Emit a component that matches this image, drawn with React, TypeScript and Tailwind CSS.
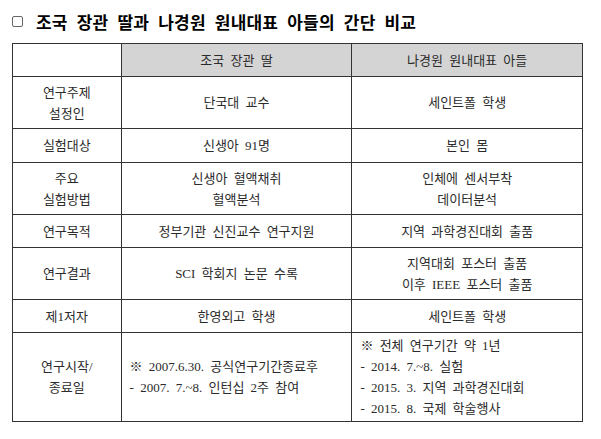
import React from 'react'

const body = { fontFamily: '"Liberation Serif", "Noto Sans CJK KR", serif' }

interface Row {
  label: string[]
  a: string[]
  b: string[]
  h: string
  left?: boolean
}

const rows: Row[] = [
  { label: ['연구주제', '설정인'], a: ['단국대 교수'], b: ['세인트폴 학생'], h: 'h-[52px]' },
  { label: ['실험대상'], a: ['신생아 91명'], b: ['본인 몸'], h: 'h-[34px]' },
  { label: ['주요', '실험방법'], a: ['신생아 혈액채취', '혈액분석'], b: ['인체에 센서부착', '데이터분석'], h: 'h-[52px]' },
  { label: ['연구목적'], a: ['정부기관 신진교수 연구지원'], b: ['지역 과학경진대회 출품'], h: 'h-[33px]' },
  { label: ['연구결과'], a: ['SCI 학회지 논문 수록'], b: ['지역대회 포스터 출품', '이후 IEEE 포스터 출품'], h: 'h-[52px]' },
  { label: ['제1저자'], a: ['한영외고 학생'], b: ['세인트폴 학생'], h: 'h-[33px]' },
  {
    label: ['연구시작/', '종료일'],
    a: ['※ 2007.6.30. 공식연구기간종료후', '- 2007. 7.~8. 인턴십 2주 참여'],
    b: ['※ 전체 연구기간 약 1년', '- 2014. 7.~8. 실험', '- 2015. 3. 지역 과학경진대회', '- 2015. 8. 국제 학술행사'],
    h: 'h-[89px]',
    left: true,
  },
]

function Lines({ lines }: { lines: string[] }) {
  return (
    <>
      {lines.map((l, i) => (
        <div key={i} className="whitespace-pre">{l}</div>
      ))}
    </>
  )
}

export default function App() {
  return (
    <div className="w-[601px] h-[439px] bg-white pl-3 pt-3">
      {/* Title */}
      <div className="flex items-center h-[18px] mb-[13px] text-black">
        <span className="w-[11px] h-[11px] border border-[#666] rounded-[2px] mr-[13px]" />
        <h1
          className="text-[17px] font-bold tracking-[0.2px] [word-spacing:5px] leading-none"
          style={{ fontFamily: '"Noto Sans CJK KR", sans-serif' }}
        >
          조국 장관 딸과 나경원 원내대표 아들의 간단 비교
        </h1>
      </div>

      {/* Comparison table */}
      <table
        className="border-collapse text-[13px] leading-[21px] [word-spacing:3px] text-[#2b2b2b] w-[571px]"
        style={body}
      >
        <colgroup>
          <col className="w-[109px]" />
          <col className="w-[231px]" />
          <col className="w-[231px]" />
        </colgroup>
        <thead>
          <tr className="h-[33px]">
            <th className="border border-[#333] font-normal" />
            <th className="border border-[#333] bg-[#d4d4d4] font-normal">조국 장관 딸</th>
            <th className="border border-[#333] bg-[#d4d4d4] font-normal">나경원 원내대표 아들</th>
          </tr>
        </thead>
        <tbody>
          {rows.map((r, i) => (
            <tr key={i} className={r.h}>
              <td className="border border-[#333] text-center align-middle">
                <Lines lines={r.label} />
              </td>
              <td className={`border border-[#333] align-middle ${r.left ? 'text-left pl-2' : 'text-center'}`}>
                <Lines lines={r.a} />
              </td>
              <td className={`border border-[#333] align-middle ${r.left ? 'text-left pl-2' : 'text-center'}`}>
                <Lines lines={r.b} />
              </td>
            </tr>
          ))}
        </tbody>
      </table>
    </div>
  )
}
